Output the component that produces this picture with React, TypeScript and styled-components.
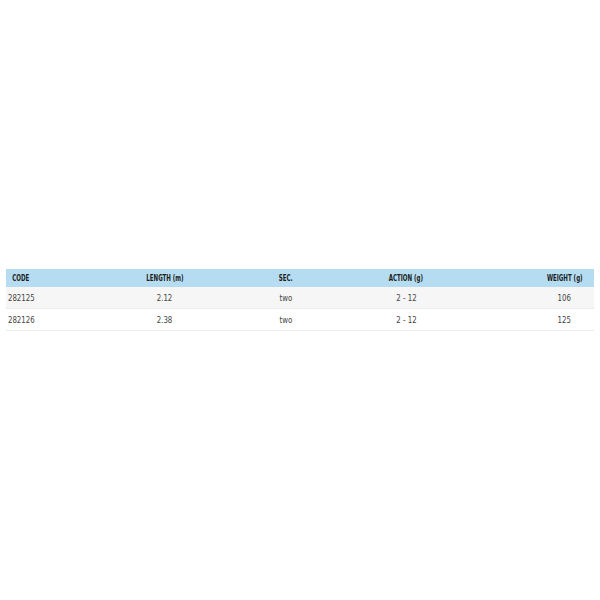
import React from 'react';
import styled, { createGlobalStyle } from 'styled-components';

const GlobalStyle = createGlobalStyle`
  html, body {
    margin: 0;
    padding: 0;
    background: #ffffff;
  }
  body {
    font-family: "DejaVu Sans Condensed", "DejaVu Sans", sans-serif;
  }
`;

const rows = [
  { code: '282125', length: '2.12', sec: 'two', action: '2 - 12', weight: '106' },
  { code: '282126', length: '2.38', sec: 'two', action: '2 - 12', weight: '125' }
];

const headers = ['CODE', 'LENGTH (m)', 'SEC.', 'ACTION (g)', 'WEIGHT (g)'];

function App() {
  return (
    <>
      <GlobalStyle />
      <Page>
        <Table>
          <HeaderRow>
            {headers.map((h, i) => (
              <HeadCell key={h} $col={i * 2 + 1}>
                <HeadText>{h}</HeadText>
              </HeadCell>
            ))}
          </HeaderRow>
          {rows.map((r, index) => (
            <BodyRow key={r.code} $striped={index % 2 === 0}>
              <Cell $col={1}><CellText>{r.code}</CellText></Cell>
              <Cell $col={3}><CellText>{r.length}</CellText></Cell>
              <Cell $col={5}><CellText>{r.sec}</CellText></Cell>
              <Cell $col={7}><CellText>{r.action}</CellText></Cell>
              <Cell $col={9}><CellText>{r.weight}</CellText></Cell>
            </BodyRow>
          ))}
        </Table>
      </Page>
    </>
  );
}

const Page = styled.div`
  width: 600px;
  height: 600px;
  display: flex;
  flex-direction: column;
  padding: 269px 6px 0 6px;
  box-sizing: border-box;
`;

const Table = styled.div`
  display: flex;
  flex-direction: column;
  width: 588px;
`;

const rowGrid = `
  display: grid;
  grid-template-columns: 30px 84px 90px 46px 60px 50px 80px 89px 59px;
  align-items: center;
`;

const HeaderRow = styled.div`
  ${rowGrid}
  height: 18px;
  background-color: #b5dcf1;
`;

const BodyRow = styled.div<{ $striped: boolean }>`
  ${rowGrid}
  height: 21px;
  background-color: ${(props) => (props.$striped ? '#f6f6f6' : '#ffffff')};
  border-bottom: 1px solid #ececec;
`;

const HeadCell = styled.div<{ $col: number }>`
  grid-column: ${(props) => props.$col};
  display: flex;
  justify-content: center;
  white-space: nowrap;
`;

const HeadText = styled.span`
  display: inline-block;
  font-size: 8.5px;
  font-weight: 700;
  color: #1c1c1c;
  transform: scaleX(0.72);
`;

const Cell = styled.div<{ $col: number }>`
  grid-column: ${(props) => props.$col};
  display: flex;
  justify-content: center;
  white-space: nowrap;
`;

const CellText = styled.span`
  display: inline-block;
  font-size: 9.5px;
  color: #444444;
  transform: scaleX(0.82);
`;

export default App;
